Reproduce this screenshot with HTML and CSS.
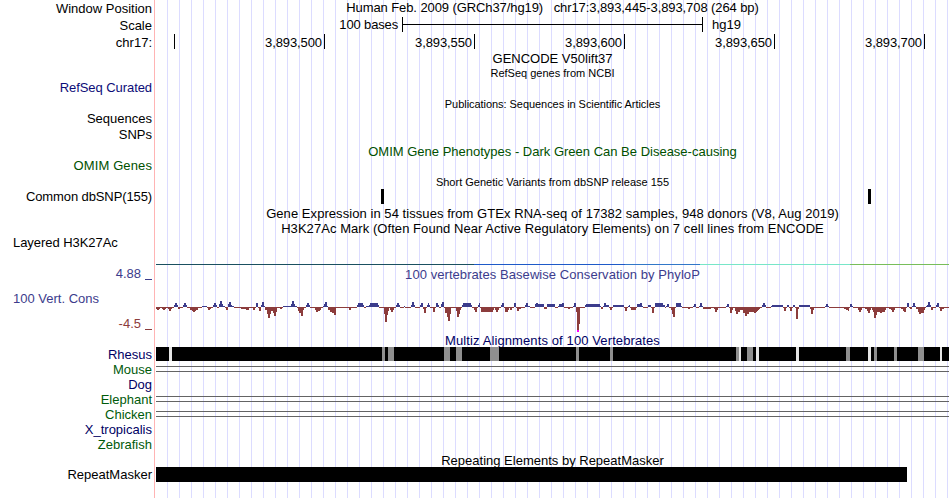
FILE: index.html
```html
<!DOCTYPE html>
<html lang="en">
<head>
<meta charset="utf-8">
<title>Genome Browser</title>
<link rel="stylesheet" href="styles.css">
</head>
<body>
<main class="browser">
  <div class="row position"><div class="label">Window Position</div><div class="title"><span>Human Feb. 2009 (GRCh37/hg19) &nbsp; chr17:3,893,445-3,893,708 (264 bp)</span></div></div>
  <div class="row scale"><div class="label">Scale</div><div class="scale-track"><span class="scale-size">100 bases</span><span class="scale-bar"></span><span>hg19</span></div></div>
  <div class="row ruler"><div class="label">chr17:</div><div class="ticks"><span class="first"></span><span>3,893,500</span><span>3,893,550</span><span>3,893,600</span><span>3,893,650</span><span>3,893,700</span></div></div>
  <div class="row gencode"><div></div><div class="title"><span>GENCODE V50lift37</span></div></div>
  <div class="row h15"><div></div><div class="title small"><span>RefSeq genes from NCBI</span></div></div>
  <div class="row h16"><div class="label refseq">RefSeq Curated</div></div>
  <div class="row h15"><div></div><div class="title small tight"><span>Publications: Sequences in Scientific Articles</span></div></div>
  <div class="row h16"><div class="label">Sequences</div></div>
  <div class="row h17"><div class="label">SNPs</div></div>
  <div class="row h14"><div></div><div class="title omim"><span>OMIM Gene Phenotypes - Dark Green Can Be Disease-causing</span></div></div>
  <div class="row h16"><div class="label omim loose">OMIM Genes</div></div>
  <div class="row h15"><div></div><div class="title small"><span>Short Genetic Variants from dbSNP release 155</span></div></div>
  <div class="row h17"><div class="label dbsnp">Common dbSNP(155)</div><div class="variants"><i></i><i></i></div></div>
  <div class="row h15"><div></div><div class="title wide"><span>Gene Expression in 54 tissues from GTEx RNA-seq of 17382 samples, 948 donors (V8, Aug 2019)</span></div></div>
  <div class="row h14"><div></div><div class="title wide"><span>H3K27Ac Mark (Often Found Near Active Regulatory Elements) on 7 cell lines from ENCODE</span></div></div>
  <div class="row layered"><div class="label left tight">Layered H3K27Ac</div><div class="signal"><i class="s1"></i><i class="s2"></i><i class="s3"></i><i class="s4"></i><i class="s5"></i></div></div>
  <div class="row conservation">
    <div class="axis"><div class="label limit">4.88 <b></b></div><div class="label left">100 Vert. Cons</div><div class="label limit min">-4.5 <b></b></div></div>
    <div class="cons-track"><div class="title cons wide"><span>100 vertebrates Basewise Conservation by PhyloP</span></div>
    <svg class="wiggle" id="wiggle" width="793" height="40" viewBox="156 295 793 40" shape-rendering="crispEdges"></svg></div>
  </div>
  <div class="row h14"><div></div><div class="title navy loose"><span>Multiz Alignments of 100 Vertebrates</span></div></div>
  <div class="row h15"><div class="label navy">Rhesus</div><svg id="rhesus" width="793" height="14" viewBox="156 0 793 14" shape-rendering="crispEdges"></svg></div>
  <div class="row h15"><div class="label green">Mouse</div><div class="double"></div></div>
  <div class="row h15"><div class="label navy">Dog</div></div>
  <div class="row h15"><div class="label green">Elephant</div><div class="double"></div></div>
  <div class="row h15"><div class="label green">Chicken</div><div class="double"></div></div>
  <div class="row h15"><div class="label navy">X_tropicalis</div></div>
  <div class="row h16"><div class="label green">Zebrafish</div></div>
  <div class="row h14"><div></div><div class="title"><span>Repeating Elements by RepeatMasker</span></div></div>
  <div class="row h15"><div class="label">RepeatMasker</div><div class="repeat"></div></div>
</main>
<script src="tracks.js"></script>
</body>
</html>
```
FILE: styles.css
```css
body { margin: 0; background: #fff; }
.browser {
  box-sizing: border-box;
  width: 949px;
  height: 498px;
  padding-top: 1px;
  overflow: hidden;
  font: 13px/15px "Liberation Sans", Arial, sans-serif;
  color: #000;
  white-space: nowrap;
  background:
    linear-gradient(#ffb4b4, #ffb4b4) 154px 0 / 1px 100% no-repeat,
    repeating-linear-gradient(90deg, #dcdcff 0 1px, transparent 1px 12px) 167px 0 / 782px 100% no-repeat;
}
.row { display: grid; grid-template-columns: 156px 793px; align-items: start; }
.h14 { height: 14px; }
.h15 { height: 15px; }
.h16 { height: 16px; }
.h17 { height: 17px; }
.label { padding-right: 4px; text-align: right; }
.label.left { padding: 0 0 0 13px; text-align: left; }
.title { text-align: center; }
.small { padding-top: 1px; font-size: 11px; }
.wide { letter-spacing: 0.06px; }
.loose { letter-spacing: 0.11px; }
.tight { letter-spacing: -0.05px; }
.refseq { color: #0c0c78; letter-spacing: -0.07px; }
.dbsnp { letter-spacing: -0.11px; }
.omim { color: #005000; }
.navy { color: #000064; }
.green { color: #005a0a; }
.position { height: 16px; }
.position .title { margin-top: -1px; letter-spacing: -0.09px; }
.scale { height: 17px; }
.scale .label, .ruler .label { padding-top: 1px; }
.scale-track { display: flex; }
.scale-size { width: 242px; margin-right: 4px; text-align: right; letter-spacing: -0.15px; }
.scale-bar {
  box-sizing: border-box;
  width: 301px;
  height: 15px;
  margin-right: 9px;
  border: solid #000;
  border-width: 0 1px;
  background: linear-gradient(#000, #000) 0 7px / 100% 1px no-repeat;
}
.ruler { height: 17px; }
.ticks { display: flex; letter-spacing: -0.1px; }
.ticks span {
  box-sizing: border-box;
  width: 150px;
  height: 15px;
  padding: 1px 2px 0 0;
  border-right: 1px solid #000;
  text-align: right;
}
.ticks .first { width: 19px; }
.gencode { height: 14px; }
.variants { display: flex; gap: 484px; padding-left: 225px; }
.variants i { width: 3px; height: 15px; background: #000; }
.layered { height: 30px; }
.signal { display: flex; padding-top: 29px; }
.signal i { height: 1px; }
.s1 { width: 318px; background: #1a5060; }
.s2 { width: 151px; background: #1e5ac8; }
.s3 { width: 75px; background: #3278c8; }
.s4 { width: 150px; background: #78e6c8; }
.s5 { width: 99px; background: #78be5a; }
.conservation { height: 68px; color: #3c3c8c; }
.axis { display: flex; flex-direction: column; gap: 10px; padding-top: 1px; }
.limit { display: flex; justify-content: flex-end; gap: 4px; }
.limit b { width: 7px; height: 1px; margin-top: 13px; background: currentColor; }
.min { color: #8c3c3c; }
.cons { padding-top: 2px; }
.wiggle { display: block; margin-top: 13px; }
.double {
  height: 4px;
  margin-top: 4px;
  border: solid #646464;
  border-width: 1px 0;
}
.repeat { width: 751px; height: 15px; background: #000; }
```
FILE: tracks.js
```js
// Conservation steps: each block has an origin and "offset value" pairs.
const blocks = [
  [150, "6 -2,7 -3,9 -2,10 -1,12 -2,13 -3,15 -2,16 -1,18 -2,19 -4,21 -2,22 -1,24 2,25 4,27 2,28 -2,30 -1,33 2,34 4,36 2,37 -1,40 -3,42 -4,43 -5,45 -4,46 -3,48 -1,52 1,57 -1,58 -3,60 -2,61 -1,63 2,64 4,66 2,67 -1,69 3,70 6,72 3,73 1,75 -1,76 -3,78 3,79 5,81 2,82 1,84 -1,91 -2,96 -3,99 -1,103 -3,105 -1,106 4,108 -1,109 -4,111 2,112 5,114 1,115 -3,117 -7,118 -11,120 -7,121 -4,123 -6,124 -9,126 -5,127 -1,130 -2,132 -1,133 1,141 3,142 6,144 3,145 1,147 -1,148 -4,149 -6,151 -9,153 -3,154 -1,156 2,157 4,159 2,160 -1,165 -3,166 -5,168 -4,170 -3,171 -1,173 1,174 3,175 5,177 1,178 -3,180 -5,182 -6,184 -8,186 -1,199 -3"],
  [350, "0 -3,1 -1,7 2,8 4,13 2,14 -1,16 1,19 2,20 4,28 2,29 -1,34 -7,35 -15,37 -8,38 -4,39 -1,40 -3,41 -5,43 -3,44 -1,46 2,47 4,49 2,50 -1,54 1,55 -1,61 2,62 5,64 2,65 -1,70 2,71 4,73 -2,74 -6,76 -1,77 2,78 4,79 2,80 -1,83 -5,85 -1,86 4,88 2,89 -1,91 3,92 5,94 -1,95 -6,97 -10,98 -14,100 -7,101 -1,106 -4,107 -10,109 -7,110 -3,111 -1,112 2,113 4,121 2,122 -1,124 -3,125 -5,127 -1,128 2,129 4,130 -1,131 -5,143 -3,144 -1,145 -3,146 -5,148 -3,149 -1,151 2,152 4,154 -1,155 -5,158 -3,159 -1,160 -3,162 -1,164 4,166 -1,167 -4,169 -2,171 -1,175 2,176 4,178 1,180 -1,185 3,186 4,188 3,194 -2,197 3"],
  [550, "0 3,5 -1,8 1,9 3,12 4,14 -1,18 -2,20 -1,23 1,24 4,26 -5,27 -23,29 -17,30 -1,35 2,36 3,50 1,51 -2,53 1,54 4,56 2,59 -1,60 -3,62 -1,63 2,74 -1,75 -4,77 -1,78 1,79 2,80 -1,81 -3,86 -1,87 3,90 4,92 1,93 -1,98 2,101 -1,102 -6,104 -1,105 4,113 2,115 -1,116 1,117 3,119 -1,121 -3,122 -7,123 -10,125 -1,126 4,131 1,132 -1,138 -2,140 -1,143 1,144 3,146 -1,149 1,150 4,152 1,153 -2,161 -1,164 -2,165 -5,167 -3,168 -1,176 1,177 3,179 -1,180 -6,182 -3,183 -1,185 -4,186 -7,188 -5,190 -3,193 -6,195 -9,197 -7,199 -5"],
  [750, "0 -5,4 -6,6 -5,7 -4,8 -3,9 -2,10 -1,12 2,13 4,15 2,16 -1,21 1,22 2,33 -1,34 -4,36 -1,37 2,39 -1,40 -4,42 -1,43 2,45 -1,46 -12,48 -2,49 2,60 -2,61 -7,63 -3,64 -1,75 1,76 3,78 1,79 -1,94 -2,96 -3,98 -4,99 -1,100 3,102 1,103 -1,108 -3,109 -5,111 -3,112 -1,115 -2,117 -4,118 -6,120 -3,121 -1,122 -3,123 -5,124 -11,126 -8,127 -5,130 -6,132 -5,135 -3,136 -1,139 -2,141 -3,142 -5,144 -3,145 -1,151 -2,153 -4,154 -5,156 -1,157 4,159 -1,160 -2,162 1,163 4,165 1,166 -2,168 -5,169 -7,171 -6,174 -3,175 -1,176 1,177 2,178 5,180 2,181 -3,183 -1,186 2,187 4,189 -1,190 -4,192 -2,194 -1"]
];
const steps = blocks.flatMap(([origin, data]) => data.split(",").map(p => {
  const [x, v] = p.split(" ").map(Number);
  return [origin + x, v];
}));
const rect = (x, y, w, h, fill) => `<rect x="${x}" y="${y}" width="${w}" height="${h}" fill="${fill}"/>`;
document.getElementById("wiggle").innerHTML = steps.map(([x, v], i) => {
  const w = (i + 1 < steps.length ? steps[i + 1][0] : 949) - x;
  return v > 0 ? rect(x, 307 - v, w, v, "#3c3c8c") : rect(x, 307, w, -v, "#8c3c3c");
}).join("") + rect(577, 330, 2, 2, "#f0f");

// Alignment gaps: start, end, shade.
const gray = "#8f8f8f", light = "#e6e6e6";
document.getElementById("rhesus").innerHTML = rect(156, 0, 793, 14, "#000") + [
  [169, 172, light], [382, 385, gray], [388, 394, gray], [444, 450, gray], [456, 462, gray],
  [490, 499, gray], [576, 579, gray], [610, 613, gray], [736, 739, gray], [739, 741, light],
  [747, 753, gray], [756, 759, light], [796, 799, light], [846, 850, gray], [868, 871, light],
  [874, 877, gray], [894, 897, gray], [918, 924, gray], [940, 942, light]
].map(([a, b, c]) => rect(a, 0, b - a, 14, c)).join("");
```
